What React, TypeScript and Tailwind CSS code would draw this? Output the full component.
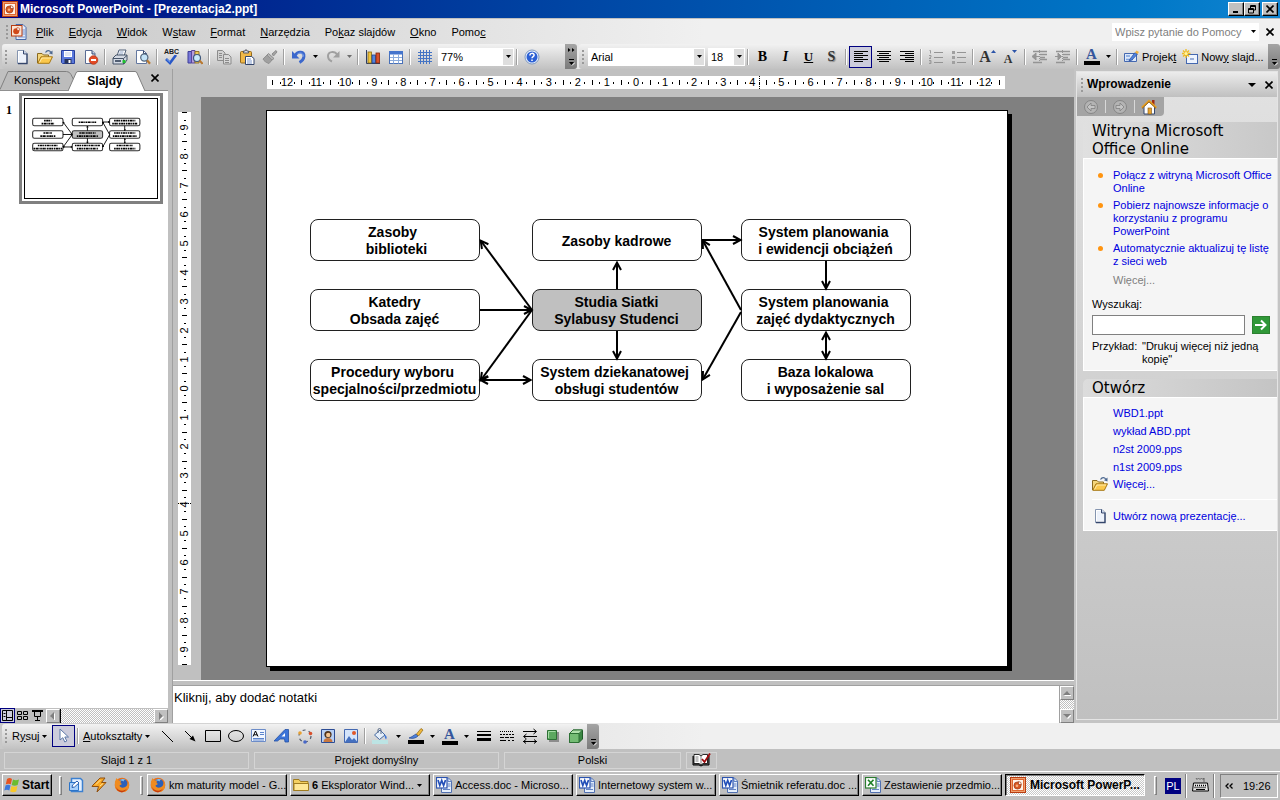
import { useState, type ReactNode } from "react";

/* ---------- small helpers ---------- */

function Icon({ children, size = 16 }: { children: ReactNode; size?: number }) {
  return (
    <svg width={size} height={size} viewBox="0 0 16 16" fill="none" aria-hidden="true" className="shrink-0">
      {children}
    </svg>
  );
}

function Caret() {
  return (
    <svg width="5" height="3" viewBox="0 0 5 3" aria-hidden="true" className="shrink-0">
      <path d="M0 0h5L2.500 3z" fill="#000" />
    </svg>
  );
}

function Cross() {
  return (
    <svg width="8" height="8" viewBox="0 0 8 8" aria-hidden="true">
      <path d="M.5 .5l7 7M7.500 .5l-7 7" stroke="#000" strokeWidth="1.600" />
    </svg>
  );
}

function Grip() {
  return (
    <span className="mx-px flex w-[6px] shrink-0 flex-col items-center gap-[2px]">
      {[0, 1, 2, 3].map((i) => (
        <i key={i} className="size-[2px] bg-[#9a9a9a]" />
      ))}
    </span>
  );
}

function Sep() {
  return <span className="mx-[2px] h-4 w-[2px] shrink-0 border-l border-r border-l-[#a0a0a0] border-r-white" />;
}

function Tool({ label, active, children }: { label: string; active?: boolean; children: ReactNode }) {
  return (
    <button
      aria-label={label}
      className={
        active
          ? "flex h-[22px] w-[23px] shrink-0 items-center justify-center border border-[#000080] bg-[#ccccdc]"
          : "flex h-[22px] w-[23px] shrink-0 items-center justify-center"
      }
    >
      {children}
    </button>
  );
}

function Drop({ label, dim }: { label: string; dim?: boolean }) {
  return (
    <button
      aria-label={label}
      className={dim ? "flex h-[22px] w-[11px] shrink-0 items-center justify-center opacity-50" : "flex h-[22px] w-[11px] shrink-0 items-center justify-center"}
    >
      <Caret />
    </button>
  );
}

function BarEnd({ arrows }: { arrows?: boolean }) {
  return (
    <button
      aria-label="Opcje paska narzędzi"
      className="flex h-[25px] w-[12px] shrink-0 flex-col items-center justify-between rounded-r-[3px] bg-gradient-to-b from-[#a4a4a4] to-[#7c7c7c] pt-1 pb-[3px]"
    >
      <svg width="7" height="5" viewBox="0 0 7 5">
        {arrows && <path d="M0 0l2.500 2L0 4zM4 0l2.500 2L4 4z" fill="#000" />}
      </svg>
      <svg width="7" height="7" viewBox="0 0 7 7">
        <path d="M1 .5h5" stroke="#000" />
        <path d="M1 3h5L3.500 6z" fill="#000" />
        <path d="M4 6.500l3-3" stroke="#fff" />
      </svg>
    </button>
  );
}

function Combo({ label, value, width }: { label: string; value: string; width: string }) {
  return (
    <div className={`relative h-[18px] shrink-0 bg-white ${width}`}>
      <select aria-label={label} className="block h-[18px] w-full appearance-none pl-[3px] text-[11px] leading-[16px] outline-none">
        <option>{value}</option>
      </select>
      <span className="pointer-events-none absolute inset-y-px right-px flex w-[10px] items-center justify-center bg-[#dedede]">
        <Caret />
      </span>
    </div>
  );
}

/* ---------- icons ---------- */

function PptLogo() {
  return (
    <Icon>
      <rect x=".5" y=".5" width="15" height="15" fill="#f0a070" stroke="#b83c10" />
      <rect x="2.500" y="2.500" width="11" height="11" fill="#fff4ea" stroke="#e06830" />
      <circle cx="7.500" cy="8.500" r="3.600" fill="#d85820" stroke="#8c2c0c" strokeWidth=".6" />
      <path d="M8.500 7.500V4.500a3.200 3.200 0 0 1 3 3z" fill="#fff" stroke="#a03810" strokeWidth=".7" />
      <circle cx="7" cy="8.800" r="1.300" fill="#f8b080" />
    </Icon>
  );
}

function PptDoc() {
  return (
    <Icon>
      <path d="M5 .5h7l3 3v12H5z" fill="#dfeafb" stroke="#4668a8" />
      <path d="M11 6h3M11 8h3M11 10h3M7 13h7" stroke="#7a98d0" />
      <rect x=".5" y="1.500" width="10.500" height="10.500" fill="#fbe4d4" stroke="#b83c10" />
      <circle cx="5.200" cy="7.200" r="3" fill="#d04818" />
      <path d="M6 6.300V3.500a2.600 2.600 0 0 1 2.800 2.800z" fill="#fff" stroke="#b83c10" strokeWidth=".6" />
    </Icon>
  );
}

function NewDoc() {
  return (
    <Icon>
      <path d="M3.500 1.500h6.500l3 3v10h-9.500z" fill="#fff" stroke="#8595b0" />
      <path d="M13 4.500v10H4" stroke="#34466c" strokeWidth="1.300" />
      <path d="M5 13V3h4v3h3v7z" fill="#edf2fb" />
      <path d="M9.500 1.500v3.500h3.500" fill="#c8d4ea" stroke="#34466c" />
    </Icon>
  );
}

function Folder() {
  return (
    <Icon>
      <path d="M.5 14V4.500h4.500l1.500 1.500h5v2" fill="#f4d67c" stroke="#8a6a20" />
      <path d="M.8 14.300L4 7.800h11.500L12.300 14.300z" fill="#fbc84c" stroke="#a87814" />
      <path d="M2.500 13.500L5 9h9" stroke="#ffebac" />
      <path d="M8.500 3.500c1.500-2.500 4-2.500 5.300-.2" stroke="#4c6890" strokeWidth="1.200" />
      <path d="M15.500 1.500v4l-3.600-1.200z" fill="#4c6890" />
    </Icon>
  );
}

function Save() {
  return (
    <Icon>
      <path d="M1.500 1.500h13v13h-12l-1-1z" fill="#5a78dc" stroke="#28409c" />
      <rect x="4" y="2" width="8" height="6" fill="#fff" />
      <path d="M5 4h6M5 6h6" stroke="#c0cce8" />
      <rect x="4.500" y="10" width="7" height="4.500" fill="#27345c" />
      <rect x="8.500" y="11" width="2" height="3" fill="#fff" />
    </Icon>
  );
}

function Permission() {
  return (
    <Icon>
      <path d="M2.500 1.500h6.500l3 3v10h-9.500z" fill="#fff" stroke="#5a6c94" />
      <path d="M9 1.500v3.500h3" fill="#c8d4ea" stroke="#34466c" />
      <circle cx="10.500" cy="11" r="4.300" fill="#e44a24" stroke="#a82c10" strokeWidth=".7" />
      <path d="M8 11h5" stroke="#fff" strokeWidth="2" />
    </Icon>
  );
}

function Print() {
  return (
    <Icon>
      <path d="M5 7l2-6h7l-2 6z" fill="#fff" stroke="#506078" />
      <path d="M7.500 3h4M7 5h4" stroke="#8ea4c8" />
      <path d="M1 9l3-3h11v5l-3 4H1z" fill="#d4dae4" stroke="#465468" />
      <path d="M1 9.500h10.500L15 6.500M11.500 9.500V15" stroke="#465468" />
      <path d="M3 12h6" stroke="#26344c" strokeWidth="1.500" />
      <rect x="10.500" y="11" width="3" height="3" fill="#20c030" />
    </Icon>
  );
}

function Preview() {
  return (
    <Icon>
      <path d="M1.500 1.500h7l3 3v10h-10z" fill="#fff" stroke="#6478a0" />
      <path d="M8.500 1.500v3h3" stroke="#34466c" />
      <circle cx="9.300" cy="8.500" r="3.600" fill="#c4e4f8" stroke="#50647c" strokeWidth="1.200" />
      <path d="M12 11.200l3 3.500" stroke="#b87830" strokeWidth="2.200" />
    </Icon>
  );
}

function Spelling() {
  return (
    <div className="flex flex-col items-center">
      <span className="text-[7px] leading-[6px] font-bold text-[#202020]">ABC</span>
      <svg width="14" height="10" viewBox="0 0 14 10" fill="none">
        <path d="M2 4l4 4L12 0" stroke="#2858c8" strokeWidth="2.600" />
        <path d="M2.500 4L6 7.200" stroke="#78a4f4" />
      </svg>
    </div>
  );
}

function Research() {
  return (
    <Icon>
      <path d="M1 2.500h3.500V14H1z" fill="#7878d8" stroke="#3c3c98" />
      <path d="M4.500 1.500h3.500V14H4.500z" fill="#b49cdc" stroke="#58449c" />
      <path d="M8 2.500h4V14H8z" fill="#ecca58" stroke="#94742c" />
      <circle cx="10" cy="9" r="3.500" fill="#c8e8fa" stroke="#40587c" strokeWidth="1.200" />
      <path d="M12.500 11.500l3 3.200" stroke="#b87830" strokeWidth="2" />
    </Icon>
  );
}

function Copy() {
  return (
    <Icon>
      <path d="M1.500 1.500h5l2.500 2.500v7.500H1.500z" fill="#d2d2d2" stroke="#8c8c8c" />
      <path d="M7.500 5.500h5l2.500 2.500v7H7.500z" fill="#d8d8d8" stroke="#8c8c8c" />
      <path d="M3 4.500h3M3 6.500h3M3 8.500h3M9 9.500h4M9 11.500h4M9 13.500h4" stroke="#8c8c8c" />
    </Icon>
  );
}

function Paste() {
  return (
    <Icon>
      <rect x="1.500" y="2.500" width="11" height="11.500" rx="1" fill="#f0b848" stroke="#946a1c" />
      <path d="M4.500 4V2h1.500l1-1.500 1 1.500h1.500v2z" fill="#d4dae8" stroke="#5a5a60" />
      <path d="M6.500 7.500h6l2.500 2v6H6.500z" fill="#fff" stroke="#34466c" />
      <path d="M8 10h4M8 12h5M8 14h5" stroke="#7c98cc" />
    </Icon>
  );
}

function Brush() {
  return (
    <Icon>
      <path d="M10 5l4-3.500 1 1.500-3.500 4z" fill="#a4a4a4" stroke="#8c8c8c" />
      <path d="M6.500 4.500l5.500 5-2 1.500L5 6z" fill="#b4b4b4" stroke="#8c8c8c" />
      <path d="M5 6l5 5-3 3.500C4 13.500 2 12 1 10z" fill="#a0a0a0" stroke="#909090" />
    </Icon>
  );
}

function Undo({ dim }: { dim?: boolean }) {
  return dim ? (
    <Icon>
      <path d="M12.500 6C9.500 1.500 3 2.500 3 7c0 2.500 1.500 4.500 4 5.500" stroke="#a0a0a0" strokeWidth="2" />
      <path d="M14.500 2v6.500H8z" fill="#a0a0a0" />
    </Icon>
  ) : (
    <Icon>
      <path d="M4 6.500C7 1.500 13.500 2.500 13 7.500c-.3 2.500-2 4.500-4.500 6" stroke="#3c68cc" strokeWidth="2.800" />
      <path d="M1 2v7.500H8.500z" fill="#3c68cc" />
      <path d="M6.500 5c3-2 6-.6 6 2.500" stroke="#90b4f4" strokeWidth=".8" />
    </Icon>
  );
}

function ChartIcon() {
  return (
    <Icon>
      <path d="M1.500 1v13.500H15" stroke="#2c3c60" />
      <rect x="3" y="3" width="3.500" height="11" fill="#f0c43c" stroke="#8c6c10" strokeWidth=".8" />
      <rect x="7" y="6" width="3.500" height="8" fill="#5084e0" stroke="#24448c" strokeWidth=".8" />
      <rect x="11" y="4" width="3.500" height="10" fill="#d8502c" stroke="#842408" strokeWidth=".8" />
    </Icon>
  );
}

function TableIcon() {
  return (
    <Icon>
      <rect x="1.500" y="2.500" width="13" height="12" fill="#fff" stroke="#4870b8" />
      <rect x="1" y="2" width="14" height="3.500" fill="#4474cc" />
      <path d="M2 8.500h12M2 11.500h12M5.500 5.500v9M10.500 5.500v9" stroke="#8cacdc" />
    </Icon>
  );
}

function GridIcon() {
  return (
    <Icon>
      <path d="M1 3.500h14M1 6.500h14M1 9.500h14M1 12.500h14M3.500 1v14M6.500 1v14M9.500 1v14M12.500 1v14" stroke="#4474c4" />
    </Icon>
  );
}

function HelpIcon() {
  return (
    <Icon>
      <circle cx="8" cy="8" r="7" fill="#e8f0fc" stroke="#6888b8" strokeWidth=".8" />
      <circle cx="8" cy="8" r="5.500" fill="#2c60d4" />
      <path d="M5.900 6.500c0-2.800 4.400-2.800 4.200-.2C10 7.600 8 7.600 8 9.300M8 10.600v1.500" stroke="#fff" strokeWidth="1.500" />
    </Icon>
  );
}

function Align({ kind }: { kind: "left" | "center" | "right" }) {
  const d = {
    left: "M1 2.500h14M1 4.500h9M1 6.500h14M1 8.500h9M1 10.500h14M1 12.500h9",
    center: "M1 2.500h14M3 4.500h10M1 6.500h14M3 8.500h10M1 10.500h14M3 12.500h10",
    right: "M1 2.500h14M6 4.500h9M1 6.500h14M6 8.500h9M1 10.500h14M6 12.500h9",
  };
  return (
    <Icon>
      <path d={d[kind]} stroke="#000" />
    </Icon>
  );
}

function ListIcon({ numbered }: { numbered?: boolean }) {
  return (
    <Icon>
      <path d="M6 3.500h9M6 8.500h9M6 13.500h9" stroke="#949494" />
      {numbered ? (
        <path d="M1.500 1.500h1v3M1 6.500h2v1.500l-2 1.500h2M1 11.500h2v3H1M1.500 13h1.500" stroke="#949494" strokeWidth=".9" />
      ) : (
        <path d="M1 2h3v3H1zM1 7h3v3H1zM1 12h3v3H1z" fill="#a0a0a0" />
      )}
    </Icon>
  );
}

function IndentIcon({ back }: { back?: boolean }) {
  return (
    <Icon>
      <path d="M1 2.500h14M8 5.500h7M8 8.500h5M8 10.500h7M1 13.500h9" stroke="#949494" strokeWidth="1.300" />
      {back ? (
        <path d="M0 7.500L4 4v7zM3 7.500h4" fill="#949494" stroke="#949494" />
      ) : (
        <path d="M6.500 7.500L3 4v7zM0 7.500h4" fill="#949494" stroke="#949494" />
      )}
      <path d="M7.500 1v14" stroke="#949494" strokeDasharray="1 1" />
    </Icon>
  );
}

function FontSize({ up }: { up?: boolean }) {
  return (
    <span className="flex items-start">
      <span
        className={
          up
            ? "font-['Liberation_Serif',serif] text-[16px] leading-[18px] font-bold text-[#333]"
            : "pt-[4px] font-['Liberation_Serif',serif] text-[12px] leading-[14px] font-bold text-[#333]"
        }
      >
        A
      </span>
      <svg width="5" height="3" viewBox="0 0 5 3" className="mt-[2px]">
        <path d={up ? "M0 3h5L2.500 0z" : "M0 0h5L2.500 3z"} fill="#2c54a8" />
      </svg>
    </span>
  );
}

function FontColor() {
  return (
    <span className="flex w-4 flex-col items-center">
      <span className="font-['Liberation_Serif',serif] text-[15px] leading-[13px] font-bold text-[#34569c]">A</span>
      <i className="h-[4px] w-4 bg-black" />
    </span>
  );
}

function DesignIcon() {
  return (
    <Icon>
      <path d="M1.500 4.500h12v8h-12z" fill="#dce8fa" stroke="#4468b0" />
      <path d="M3 10.500h7M3 7h4" stroke="#7ca0dc" strokeWidth="1.400" />
      <path d="M7 10l5-6.500 2.500 1.500L9 11l-3 1z" fill="#5084e0" stroke="#2c4c94" strokeWidth=".7" />
      <path d="M12 3.500l1.500-2L16 3l-1.500 2z" fill="#f4b440" />
    </Icon>
  );
}

function NewSlideIcon() {
  return (
    <Icon>
      <rect x="4.500" y="5.500" width="11" height="9" fill="#eef4fe" stroke="#4468b0" />
      <path d="M8 10h4" stroke="#4468b0" />
      <path d="M4 0v9M0 4.500h8.500M1 1.500l6 6M7 1.500l-6 6" stroke="#f0bc20" strokeWidth="1.300" />
      <circle cx="4" cy="4.500" r="1.600" fill="#fff4a0" />
    </Icon>
  );
}

function HomeIcon() {
  return (
    <Icon>
      <rect x="11" y="1" width="2.500" height="5" fill="#a02c14" />
      <path d="M3 7.500V15h10.500V7.500L8 2.500z" fill="#fff" stroke="#34466c" />
      <path d="M.8 8.800L8 1.800l7.300 7" stroke="#e8a020" strokeWidth="2" />
      <path d="M1 9.500L8 2.800l7 6.700" stroke="#644010" strokeWidth=".6" />
      <rect x="7" y="9" width="3.500" height="6" fill="#e8a430" stroke="#80540c" strokeWidth=".6" />
    </Icon>
  );
}

function NavArrow({ forward }: { forward?: boolean }) {
  return (
    <Icon>
      <circle cx="8" cy="8" r="6.500" fill="#b4b4b4" stroke="#868686" />
      <path
        d={forward ? "M4 6.500h4V4l4 4-4 4V9.500H4z" : "M12 6.500H8V4L4 8l4 4V9.500h4z"}
        fill="#c4c4c4"
        stroke="#808080"
        strokeWidth=".8"
      />
    </Icon>
  );
}

function Firefox() {
  return (
    <Icon>
      <circle cx="8" cy="8" r="7.300" fill="#e8701c" />
      <circle cx="8.800" cy="6.800" r="4.800" fill="#2c60b8" />
      <path d="M5.500 3.500c1.500-1.500 4-2 6-.8-1.500 0-2 .8-1.500 1.800-1.500-.8-3-.6-4.500-1z" fill="#7cbcec" />
      <path d="M1 4.500L2.500 1l2 2.500 2.500.3L6.500 6 8 7l-2.500 1.500c.5 2.500 4.500 3 7 .5 1-1.200 1.500-3 1-5C16.500 8 15 15 8 15.300 3 15 .3 10 1 4.500z" fill="#f08c20" />
      <path d="M2 10c2 4 8 5 11 1.500-1.500 3-4 4-6 3.700C4.500 14.800 2.500 12.500 2 10z" fill="#c43c10" />
    </Icon>
  );
}

function OfficeDoc({ excel }: { excel?: boolean }) {
  return (
    <Icon>
      <path d="M5.500 1h7l3 3v11.500h-10z" fill="#e4eefc" stroke="#5070b0" />
      <path d="M12 1v3.500h3.500M11.500 7h3M11.500 9h3M7 12.500h7" stroke="#6484c4" />
      <rect x=".5" y=".5" width="10.500" height="10.500" fill="#fff" stroke={excel ? "#2c7c30" : "#2c54b0"} strokeWidth="1.200" />
      <path
        d={excel ? "M3 2.800l5.500 6M8.500 2.800l-5.500 6" : "M2 3l1.800 5.500L5.700 3.500l1.900 5L9.500 3"}
        stroke={excel ? "#208028" : "#2450b8"}
        strokeWidth="1.700"
      />
    </Icon>
  );
}

function PlainFolder() {
  return (
    <Icon>
      <path d="M.5 13.500v-11h5.500l1.500 2h7.500v9z" fill="#f4d060" stroke="#a07c20" />
      <path d="M1 13.500V6.500h14.500v7z" fill="#ffe896" stroke="#a07c20" />
    </Icon>
  );
}

function WinFlag() {
  return (
    <Icon>
      <path d="M3 2c1.800-1.200 3.400-1.200 5 0L6.800 7.300C5.200 6.500 3.500 6.500 1.800 7.300z" fill="#e85420" />
      <path d="M9 2.500c2 1 3.800 1 6 0L13.700 8c-2.200 1-4 1-6 0z" fill="#6cbc30" />
      <path d="M1.500 8.500c1.700-.9 3.400-.9 5 0L5.300 13.500C3.700 12.600 2 12.600.3 13.500z" fill="#3c78dc" />
      <path d="M7.400 9.100c2 1 3.800 1 6 0l-1.200 5.300c-2.200 1-4 1-6 0z" fill="#f8c828" />
    </Icon>
  );
}

/* ---------- diagram ---------- */

const NODES = [
  { x: 43, y: 108, text: "Zasoby \n biblioteki" },
  { x: 43, y: 178, text: "Katedry\nObsada zajęć" },
  { x: 43, y: 248, text: "Procedury wyboru \nspecjalności/przedmiotu" },
  { x: 265, y: 108, text: "Zasoby kadrowe" },
  { x: 265, y: 178, text: "Studia Siatki\nSylabusy Studenci", dark: true },
  { x: 265, y: 248, text: "System dziekanatowej \nobsługi studentów" },
  { x: 474, y: 108, text: "System planowania \ni ewidencji obciążeń" },
  { x: 474, y: 178, text: "System planowania \nzajęć dydaktycznych" },
  { x: 474, y: 248, text: "Baza lokalowa\ni wyposażenie sal" },
];

// x1, y1, x2, y2, head on both ends
const ARROWS: [number, number, number, number, boolean?][] = [
  [265, 199, 214, 130],
  [213, 199, 264, 199],
  [265, 199, 214, 269],
  [214, 269, 263, 269, true],
  [350, 178, 350, 152],
  [350, 220, 350, 247],
  [435, 129, 473, 129],
  [474, 199, 436, 130],
  [474, 201, 436, 268],
  [559, 150, 559, 177],
  [559, 222, 559, 247, true],
];

function Arrows({ id, weight }: { id: string; weight: number }) {
  return (
    <>
      <defs>
        <marker id={id} markerUnits="userSpaceOnUse" markerWidth="12" markerHeight="12" refX="9" refY="6" orient="auto-start-reverse">
          <path d="M2 2L9.500 6 2 10" fill="none" stroke="#000" strokeWidth={weight} />
        </marker>
      </defs>
      {ARROWS.map(([x1, y1, x2, y2, both]) => (
        <line
          key={`${x1}-${y1}-${x2}-${y2}`}
          x1={x1}
          y1={y1}
          x2={x2}
          y2={y2}
          stroke="#000"
          strokeWidth={weight}
          markerEnd={`url(#${id})`}
          markerStart={both ? `url(#${id})` : undefined}
        />
      ))}
    </>
  );
}

function Slide() {
  return (
    <div className="relative h-[557px] w-[742px] shrink-0 border border-black bg-white shadow-[4px_4px_0_#000]">
      {NODES.map((n) => (
        <div
          key={n.text}
          className={
            n.dark
              ? "absolute flex h-[42px] w-[170px] items-center justify-center rounded-[8px] border border-[#202020] bg-[#c0c0c0] pt-[2px] text-center text-[14px] leading-[17px] font-bold whitespace-pre"
              : "absolute flex h-[42px] w-[170px] items-center justify-center rounded-[8px] border border-[#202020] bg-white pt-[2px] text-center text-[14px] leading-[17px] font-bold whitespace-pre"
          }
          style={{ left: n.x, top: n.y }}
        >
          {n.text}
        </div>
      ))}
      <svg viewBox="0 0 740 555" className="absolute inset-0 size-full" aria-hidden="true">
        <Arrows id="head" weight={2} />
      </svg>
    </div>
  );
}

function Thumbnail() {
  return (
    <svg viewBox="0 0 740 555" className="block w-full" aria-hidden="true">
      {NODES.map((n) => {
        const lines = n.text.split("\n");
        return (
          <g key={n.text}>
            <rect x={n.x} y={n.y} width="170" height="42" rx="10" fill={n.dark ? "#c0c0c0" : "#fff"} stroke="#303030" strokeWidth="6" />
            {lines.map((line, i) => (
              <line
                key={line}
                x1={n.x + 85 - line.trim().length * 3.500}
                x2={n.x + 85 + line.trim().length * 3.500}
                y1={n.y + (lines.length === 1 ? 22 : 13 + i * 17)}
                y2={n.y + (lines.length === 1 ? 22 : 13 + i * 17)}
                stroke="#000"
                strokeWidth="9"
                strokeDasharray="9 3 14 2 6 4"
              />
            ))}
          </g>
        );
      })}
      <Arrows id="thumb-head" weight={5} />
    </svg>
  );
}

/* ---------- rulers ---------- */

const H_MARKS = Array.from({ length: 25 }, (_, i) => Math.abs(i - 12));
const V_MARKS = Array.from({ length: 19 }, (_, i) => Math.abs(i - 9));

function HRuler() {
  return (
    <div className="relative flex h-[13px] w-[738px] items-center bg-white px-[5px] text-[11px] leading-[13px]">
      {H_MARKS.map((n, i) => (
        <div key={i} className="flex flex-1 items-center">
          <i className="h-[5px] w-px bg-black" />
          <span className="flex-1" />
          <i className="h-[2px] w-px bg-black" />
          <span className="w-[13px] text-center">{n}</span>
          <i className="h-[2px] w-px bg-black" />
          <span className="flex-1" />
        </div>
      ))}
      <i className="h-[5px] w-px bg-black" />
      {/* pointer position */}
      <i className="absolute inset-y-0 left-2/3 border-l border-dotted border-black" />
    </div>
  );
}

function VRuler() {
  return (
    <div className="relative flex h-[553px] w-[13px] flex-col items-center bg-white text-[11px] leading-[13px]">
      {V_MARKS.map((n, i) => (
        <div key={i} className="flex flex-1 flex-col items-center">
          <i className="h-px w-[5px] bg-black" />
          <span className="flex-1" />
          <i className="h-px w-[2px] bg-black" />
          <span className="h-[13px] w-[13px] -rotate-90 text-center">{n}</span>
          <i className="h-px w-[2px] bg-black" />
          <span className="flex-1" />
        </div>
      ))}
      <i className="h-px w-[5px] bg-black" />
      <i className="absolute inset-x-0 top-[391px] border-t border-dotted border-black" />
    </div>
  );
}

/* ---------- sections ---------- */

function WinButton({ label, children }: { label: string; children: ReactNode }) {
  return (
    <button
      aria-label={label}
      className="flex h-[14px] w-4 items-center justify-center border border-t-white border-r-black border-b-black border-l-white bg-[#c0c0c0] shadow-[inset_-1px_-1px_0_#808080]"
    >
      {children}
    </button>
  );
}

function TitleBar() {
  return (
    <header className="flex h-[18px] shrink-0 items-center bg-gradient-to-r from-[#000080] to-[#1084d0] pr-[2px] pl-[2px]">
      <PptLogo />
      <h1 className="ml-[2px] flex-1 text-[12px] leading-[18px] font-bold text-white">Microsoft PowerPoint - [Prezentacja2.ppt]</h1>
      <WinButton label="Minimalizuj">
        <svg width="8" height="8" viewBox="0 0 8 8">
          <path d="M1 7h5" stroke="#000" strokeWidth="2" />
        </svg>
      </WinButton>
      <WinButton label="Przywróć w dół">
        <svg width="9" height="9" viewBox="0 0 9 9" fill="none" stroke="#000">
          <path d="M2.500 3V.5h5v4.500H6M2.500 1.500h5" />
          <path d="M.5 3.500h5v4.500h-5zM.5 4.500h5" />
        </svg>
      </WinButton>
      <span className="w-[2px]" />
      <WinButton label="Zamknij">
        <Cross />
      </WinButton>
    </header>
  );
}

const MENU = [
  ["", "P", "lik"],
  ["", "E", "dycja"],
  ["", "W", "idok"],
  ["W", "s", "taw"],
  ["", "F", "ormat"],
  ["", "N", "arzędzia"],
  ["Po", "k", "az slajdów"],
  ["", "O", "kno"],
  ["Pomo", "c", ""],
];

function MenuBar() {
  return (
    <nav className="flex h-[25px] shrink-0 items-center pr-1 pl-[3px]">
      <Grip />
      <PptDoc />
      <div className="ml-[2px] flex flex-1 gap-px">
        {MENU.map(([a, b, c]) => (
          <button key={a + b + c} className="px-[7px] text-[11px] leading-[18px]">
            {a}
            <u>{b}</u>
            {c}
          </button>
        ))}
      </div>
      <div className="flex h-[18px] w-[147px] items-center bg-white">
        <input
          aria-label="Wpisz pytanie do Pomocy"
          placeholder="Wpisz pytanie do Pomocy"
          className="h-[18px] min-w-0 flex-1 pl-[3px] text-[11px] outline-none placeholder:text-[#808080]"
        />
        <Drop label="Poprzednie pytania" />
      </div>
      <button aria-label="Zamknij okno" className="ml-[5px] flex w-[12px] justify-center">
        <Cross />
      </button>
    </nav>
  );
}

function Toolbars() {
  return (
    <div className="flex h-[25px] shrink-0 gap-[2px] pl-[2px]">
      <div className="flex w-[575px] shrink-0 items-center rounded-[3px] bg-gradient-to-b from-[#f2f2f2] to-[#c2c2c2]">
        <Grip />
        <Tool label="Nowy"><NewDoc /></Tool>
        <Tool label="Otwórz"><Folder /></Tool>
        <Tool label="Zapisz"><Save /></Tool>
        <Tool label="Uprawnienia"><Permission /></Tool>
        <Sep />
        <Tool label="Drukuj"><Print /></Tool>
        <Tool label="Podgląd wydruku"><Preview /></Tool>
        <Sep />
        <Tool label="Pisownia"><Spelling /></Tool>
        <Tool label="Poszukaj"><Research /></Tool>
        <Sep />
        <Tool label="Kopiuj"><Copy /></Tool>
        <Tool label="Wklej"><Paste /></Tool>
        <Tool label="Malarz formatów"><Brush /></Tool>
        <Sep />
        <Tool label="Cofnij"><Undo /></Tool>
        <Drop label="Lista cofania" />
        <Tool label="Ponów"><Undo dim /></Tool>
        <Drop label="Lista ponawiania" dim />
        <Sep />
        <Tool label="Wstaw wykres"><ChartIcon /></Tool>
        <Tool label="Wstaw tabelę"><TableIcon /></Tool>
        <Sep />
        <Tool label="Siatka"><GridIcon /></Tool>
        <span className="w-[2px]" />
        <Combo label="Powiększenie" value="77%" width="w-[76px]" />
        <Sep />
        <Tool label="Pomoc"><HelpIcon /></Tool>
        <span className="flex-1" />
        <BarEnd arrows />
      </div>
      <div className="flex min-w-0 flex-1 items-center rounded-l-[3px] bg-gradient-to-b from-[#f2f2f2] to-[#c2c2c2]">
        <Grip />
        <span className="w-px" />
        <Combo label="Czcionka" value="Arial" width="w-[117px]" />
        <span className="w-[3px]" />
        <Combo label="Rozmiar czcionki" value="18" width="w-[37px]" />
        <Sep />
        <Tool label="Pogrubienie">
          <b className="font-['Liberation_Serif',serif] text-[14px] leading-4">B</b>
        </Tool>
        <Tool label="Kursywa">
          <b className="font-['Liberation_Serif',serif] text-[14px] leading-4 italic">I</b>
        </Tool>
        <Tool label="Podkreślenie">
          <b className="font-['Liberation_Serif',serif] text-[13px] leading-4 underline">U</b>
        </Tool>
        <Tool label="Cień">
          <b className="font-['Liberation_Serif',serif] text-[14px] leading-4 text-[#333] [text-shadow:1px_1px_1px_#888]">S</b>
        </Tool>
        <Sep />
        <Tool label="Wyrównaj do lewej" active><Align kind="left" /></Tool>
        <Tool label="Wyśrodkuj"><Align kind="center" /></Tool>
        <Tool label="Wyrównaj do prawej"><Align kind="right" /></Tool>
        <Sep />
        <Tool label="Numerowanie"><ListIcon numbered /></Tool>
        <Tool label="Punktory"><ListIcon /></Tool>
        <Sep />
        <Tool label="Zwiększ czcionkę"><FontSize up /></Tool>
        <Tool label="Zmniejsz czcionkę"><FontSize /></Tool>
        <Sep />
        <Tool label="Zmniejsz wcięcie"><IndentIcon back /></Tool>
        <Tool label="Zwiększ wcięcie"><IndentIcon /></Tool>
        <Sep />
        <Tool label="Kolor czcionki"><FontColor /></Tool>
        <Drop label="Kolory czcionki" />
        <Sep />
        <button className="ml-[3px] flex items-center gap-[3px] text-[11px] leading-4 whitespace-nowrap">
          <DesignIcon />
          <span>Projek<u>t</u></span>
        </button>
        <button className="ml-[6px] flex items-center gap-[3px] text-[11px] leading-4 whitespace-nowrap">
          <NewSlideIcon />
          <span>Now<u>y</u> slajd...</span>
        </button>
        <span className="flex-1" />
        <BarEnd />
      </div>
    </div>
  );
}

function ScrollButton({ label, d }: { label: string; d: string }) {
  return (
    <button
      aria-label={label}
      className="flex size-[14px] shrink-0 items-center justify-center border border-t-white border-r-[#808080] border-b-[#808080] border-l-white bg-[#c0c0c0]"
    >
      <svg width="8" height="8" viewBox="0 0 8 8">
        <path d={d} fill="#fff" transform="translate(1 1)" />
        <path d={d} fill="#808080" />
      </svg>
    </button>
  );
}

function SlidePane() {
  return (
    <aside className="flex w-[168px] shrink-0 flex-col bg-white">
      <div className="flex h-[22px] items-end border-b border-[#909090] bg-[#c0c0c0] text-[11px]">
        <button className="relative h-[19px] w-[74px]">
          <svg viewBox="0 0 74 19" className="absolute inset-0 size-full" aria-hidden="true">
            <path d="M0 18.500L8 .5H66.500q3 0 4.500 3l3 6v9" fill="#bcbcbc" stroke="#808080" />
          </svg>
          <span className="relative">Konspekt</span>
        </button>
        <button className="relative -mb-px -ml-[6px] h-5 w-[78px] pr-[4px] text-[12px] font-bold">
          <svg viewBox="0 0 78 20" className="absolute inset-0 size-full" aria-hidden="true">
            <path d="M0 20L8 2q.5-1.500 2-1.500H67q1.500 0 2 1.500l8 18" fill="#fff" stroke="#808080" />
          </svg>
          <span className="relative">Slajdy</span>
        </button>
        <button aria-label="Zamknij panel" className="mb-[8px] ml-[5px]">
          <Cross />
        </button>
      </div>
      <ol className="flex-1 pt-[2px]">
        <li className="flex items-start pl-[6px]">
          <span className="w-[13px] pt-[9px] font-['Liberation_Serif',serif] text-[12px] leading-4 font-bold">1</span>
          <div className="w-[144px] border-[3px] border-[#808080] p-[2px]">
            <div className="border border-black">
              <Thumbnail />
            </div>
          </div>
        </li>
      </ol>
      <div className="flex h-[15px] items-center bg-[#c0c0c0]">
        <button aria-label="Widok normalny" className="flex size-[15px] items-center justify-center border border-[#000080] bg-[#ccccdc]">
          <svg width="11" height="11" viewBox="0 0 11 11" fill="none" stroke="#000">
            <path d="M.5 .5h10v10H.5zM4.500 .5v10M4.500 7.500h6M1.500 3.500h2M1.500 6.500h2" />
          </svg>
        </button>
        <button aria-label="Sortowanie slajdów" className="flex size-[15px] items-center justify-center">
          <svg width="11" height="9" viewBox="0 0 11 9" fill="none" stroke="#000">
            <path d="M.5 .5h4v3h-4zM6.500 .5h4v3h-4zM.5 5.500h4v3h-4zM6.500 5.500h4v3h-4z" />
          </svg>
        </button>
        <button aria-label="Pokaz slajdów" className="flex size-[15px] items-center justify-center">
          <svg width="11" height="11" viewBox="0 0 11 11" fill="none" stroke="#000">
            <path d="M0 1h11" strokeWidth="2" />
            <path d="M2.500 2v4.500h6V2M5.500 6.500V10M3 10.500h5" />
          </svg>
        </button>
        <div className="ml-px flex flex-1 bg-[repeating-conic-gradient(#fff_0_25%,#c0c0c0_0_50%)] bg-[length:2px_2px]">
          <ScrollButton label="Przewiń w lewo" d="M5 0v8L1 4z" />
          <span className="w-px bg-black" />
          <span className="flex-1" />
          <ScrollButton label="Przewiń w prawo" d="M2 0v8l4-4z" />
        </div>
      </div>
    </aside>
  );
}

function Workspace() {
  return (
    <main className="ml-[4px] flex min-w-0 flex-1 flex-col border-l border-[#a0a0a0]">
      <div className="flex h-[28px] shrink-0 items-center justify-center pt-[4px] pr-[3px] pb-[5px] pl-[28px]">
        <HRuler />
      </div>
      <div className="flex min-h-0 flex-1">
        <div className="flex w-[28px] shrink-0 items-center pl-[5px]">
          <VRuler />
        </div>
        <div className="flex min-w-0 flex-1 items-center justify-center overflow-hidden bg-[#808080] pr-[2px]">
          <Slide />
        </div>
      </div>
      <div className="h-[5px] shrink-0 border-t border-white" />
      <div className="flex h-[38px] shrink-0 border-t border-[#a0a0a0] bg-white">
        <textarea
          aria-label="Notatki"
          defaultValue="Kliknij, aby dodać notatki"
          className="flex-1 resize-none pt-[4px] pl-px text-[13px] leading-4 outline-none"
        />
        <div className="flex w-[15px] flex-col items-end justify-between border-l border-[#a0a0a0] bg-[repeating-conic-gradient(#fff_0_25%,#c0c0c0_0_50%)] bg-[length:2px_2px]">
          <ScrollButton label="W górę" d="M0 6h8L4 2z" />
          <ScrollButton label="W dół" d="M0 2h8L4 6z" />
        </div>
      </div>
    </main>
  );
}

const NEWS = [
  "Połącz z witryną Microsoft Office Online",
  "Pobierz najnowsze informacje o korzystaniu z programu PowerPoint",
  "Automatycznie aktualizuj tę listę z sieci web",
];

const RECENT = ["WBD1.ppt", "wykład ABD.ppt", "n2st 2009.pps", "n1st 2009.pps"];

function TaskPane() {
  const [query, setQuery] = useState("");

  return (
    <aside className="flex w-[206px] shrink-0 bg-[#c4c4c4] pt-[2px] pr-[2px] pb-[3px] pl-[2px]">
      <div className="flex flex-1 flex-col border border-[#e4e4e4] bg-gradient-to-b from-[#e2e2e2] to-[#c0c0c0] text-[11px] leading-[13px]">
        <div className="flex h-[25px] items-center bg-gradient-to-b from-[#ececec] to-[#c0c0c0] pr-[4px] pl-px">
          <Grip />
          <h2 className="ml-px flex-1 text-[12px] font-bold">Wprowadzenie</h2>
          <button aria-label="Inne okienka zadań" className="mr-[9px]">
            <svg width="8" height="4" viewBox="0 0 8 4">
              <path d="M0 0h8L4 4z" />
            </svg>
          </button>
          <button aria-label="Zamknij okienko">
            <Cross />
          </button>
        </div>
        <div className="flex h-[19px] w-[87px] items-center rounded-br-[4px] bg-[#a4a4a4] pl-[6px]">
          <button aria-label="Wstecz"><NavArrow /></button>
          <span className="mx-[6px] h-[13px] w-px bg-[#d8d8d8]" />
          <button aria-label="Dalej"><NavArrow forward /></button>
          <span className="mx-[6px] h-[13px] w-px bg-[#d8d8d8]" />
          <button aria-label="Strona główna"><HomeIcon /></button>
        </div>

        <section className="mt-[6px] ml-[6px]">
          <h3 className="rounded-tl-[5px] border-b border-white bg-gradient-to-r from-[#e0e0e0] to-[#c8c8c8] pr-10 pl-[9px] font-['DejaVu_Sans',sans-serif] text-[15px] leading-[18px]">
            Witryna Microsoft Office Online
          </h3>
          <div className="border-b border-l border-white bg-[#f5f5f5] pt-[10px] pb-[4px] pl-[8px]">
            <ul className="flex flex-col gap-[4px]">
              {NEWS.map((item) => (
                <li key={item} className="flex">
                  <i className="mt-[4px] ml-[6px] size-[5px] shrink-0 rounded-full bg-[#ff9410]" />
                  <a href="#news" className="ml-[10px] w-[162px] text-[#0000e0]">{item}</a>
                </li>
              ))}
            </ul>
            <p className="mt-[6px] pl-[21px] text-[#808080]">Więcej...</p>
            <label htmlFor="search" className="mt-[11px] block">Wyszukaj:</label>
            <div className="mt-[4px] flex items-center">
              <input
                id="search"
                value={query}
                onChange={(e) => setQuery(e.target.value)}
                className="h-5 w-[153px] border border-[#808080] bg-white px-[2px] outline-none"
              />
              <button aria-label="Szukaj" className="ml-[7px] flex size-[18px] items-center justify-center border border-[#2c8030] bg-[#309838]">
                <svg width="12" height="12" viewBox="0 0 12 12" fill="none" stroke="#fff" strokeWidth="2">
                  <path d="M0 6h10.500M6 1.500L10.500 6 6 10.500" />
                </svg>
              </button>
            </div>
            <div className="mt-[5px] flex">
              <span className="w-[50px] shrink-0">Przykład:</span>
              <span className="w-[125px]">"Drukuj więcej niż jedną kopię"</span>
            </div>
          </div>
        </section>

        <section className="mt-[8px] ml-[6px]">
          <h3 className="rounded-tl-[5px] border-b border-white bg-gradient-to-r from-[#dcdcdc] to-[#c4c4c4] pl-[9px] font-['DejaVu_Sans',sans-serif] text-[15px] leading-[18px]">
            Otwórz
          </h3>
          <div className="border-b border-l border-white bg-[#f5f5f5] pt-[6px] pb-[6px] pl-[8px]">
            {RECENT.map((file) => (
              <a key={file} href="#recent" className="block pl-[21px] leading-[18px] text-[#0000e0]">{file}</a>
            ))}
            <a href="#more" className="flex items-center gap-[5px] text-[#0000e0]">
              <Folder />
              Więcej...
            </a>
            <hr className="mt-[7px] mb-[8px] border-white" />
            <a href="#new" className="flex items-center gap-[5px] text-[#0000e0]">
              <NewDoc />
              Utwórz nową prezentację...
            </a>
          </div>
        </section>
      </div>
    </aside>
  );
}

function DrawingBar() {
  return (
    <div className="flex h-[26px] shrink-0 items-center bg-gradient-to-r from-[#c8c8c8] via-[#f0f0f0] via-55% to-[#f0f0f0] pl-[2px]">
      <div className="flex h-[25px] w-[597px] items-center rounded-[3px] bg-gradient-to-b from-[#f2f2f2] to-[#c2c2c2]">
        <Grip />
        <button className="flex h-[22px] w-[42px] shrink-0 items-center justify-between pr-[5px] pl-[2px] text-[11px]">
          <span>R<u>y</u>suj</span>
          <Caret />
        </button>
        <Tool label="Zaznacz obiekty" active>
          <Icon>
            <path d="M4 1v11l2.800-2.300L8.800 14l2-1-2-4h3.700z" fill="#fff" stroke="#5c78a8" />
          </Icon>
        </Tool>
        <Sep />
        <button className="flex h-[22px] w-[74px] shrink-0 items-center justify-between pr-[5px] pl-[2px] text-[11px]">
          <span><u>A</u>utokształty</span>
          <Caret />
        </button>
        <Tool label="Linia">
          <Icon><path d="M3 3l11 11" stroke="#000" /></Icon>
        </Tool>
        <Tool label="Strzałka">
          <Icon>
            <path d="M3 3l8 8" stroke="#000" />
            <path d="M13.500 13.500L7.500 11l3.500-3.500z" fill="#000" />
          </Icon>
        </Tool>
        <Tool label="Prostokąt">
          <Icon><path d="M.5 2.500h15v11H.5z" stroke="#000" /></Icon>
        </Tool>
        <Tool label="Elipsa">
          <Icon><ellipse cx="8" cy="8" rx="7.500" ry="5.500" stroke="#000" /></Icon>
        </Tool>
        <Tool label="Pole tekstowe">
          <Icon>
            <path d="M.5 1.500h14v12H.5z" fill="#f2f7ff" stroke="#6c8cc8" />
            <path d="M2 8.500L4.500 3 7 8.500M3 6.800h3" stroke="#000" />
            <path d="M9 4.500h4M9 6.500h4M2 10.500h11M2 12h11" stroke="#5c84cc" />
          </Icon>
        </Tool>
        <Tool label="Wstaw WordArt">
          <Icon>
            <path d="M0 13L11 1.500h3.500V14h-3.500l-.5-3H6l-2.500 2z" fill="#3c74d8" stroke="#2450a4" strokeWidth=".8" />
            <path d="M7.500 8.500L11 5v3.500z" fill="#fff" />
          </Icon>
        </Tool>
        <Tool label="Wstaw diagram">
          <Icon>
            <circle cx="8" cy="8" r="6" stroke="#505868" strokeDasharray="3 3.280" strokeWidth="1.200" />
            <circle cx="3" cy="5" r="1.800" fill="#e8a030" />
            <circle cx="13.500" cy="5.500" r="1.800" fill="#d8502c" />
            <circle cx="8" cy="14" r="1.800" fill="#4868c8" />
          </Icon>
        </Tool>
        <Tool label="Wstaw obiekt clipart">
          <Icon>
            <path d="M1.500 1.500h13v13h-13z" fill="#b8d0f4" stroke="#2c4c94" />
            <path d="M3.500 14c0-3 2-4 4.500-4s4.500 1 4.500 4z" fill="#c87840" />
            <circle cx="8" cy="6.500" r="3.600" fill="#50341c" />
            <circle cx="8.200" cy="7" r="2.200" fill="#f4c490" />
          </Icon>
        </Tool>
        <Tool label="Wstaw obraz">
          <Icon>
            <path d="M1.500 1.500h13v13h-13z" fill="#d4e4fa" stroke="#4468b0" />
            <path d="M2 14l4-6 3 4 2-2 3.500 4z" fill="#4470c0" />
            <circle cx="11" cy="5" r="2" fill="#e05828" />
          </Icon>
        </Tool>
        <Sep />
        <Tool label="Kolor wypełnienia">
          <Icon>
            <path d="M2.500 7L8 2l5 5-5.500 4.500z" fill="#e4eefa" stroke="#4468a0" />
            <path d="M6 5V2q0-1.500 1.500-1.500T9 2v4" stroke="#5c6c88" />
            <path d="M12.500 6.500c2 1 3 3 1.500 5-1-1-1.500-3-1.500-5z" fill="#3c74d8" />
            <path d="M0 12h16v4H0z" fill="#bce4e4" />
          </Icon>
        </Tool>
        <span className="w-[2px]" />
        <Drop label="Kolory wypełnienia" />
        <Tool label="Kolor linii">
          <Icon>
            <path d="M1 10c3-1 5-3 7-4l2 2c-2 2-5 3-9 2z" fill="#4c80dc" stroke="#24448c" strokeWidth=".7" />
            <path d="M8.500 6L13 .5l2 1.500-4.500 6z" fill="#f0b83c" stroke="#8c6410" strokeWidth=".7" />
            <path d="M0 12h16v4H0z" fill="#000" />
          </Icon>
        </Tool>
        <Drop label="Kolory linii" />
        <Tool label="Kolor czcionki"><FontColor /></Tool>
        <Drop label="Kolory czcionki" />
        <Tool label="Styl linii">
          <Icon>
            <path d="M1 3.500h14" stroke="#000" />
            <path d="M1 7h14" stroke="#000" strokeWidth="2" />
            <path d="M1 11.500h14" stroke="#000" strokeWidth="3" />
          </Icon>
        </Tool>
        <Tool label="Styl kreski">
          <Icon>
            <path d="M1 3.500h14" stroke="#000" strokeDasharray="1 1" />
            <path d="M1 6.500h14" stroke="#000" strokeDasharray="2 1" />
            <path d="M1 9.500h14" stroke="#000" strokeDasharray="4 1" />
            <path d="M1 12.500h14" stroke="#000" strokeDasharray="6 2 2 2" />
          </Icon>
        </Tool>
        <Tool label="Styl strzałki">
          <Icon>
            <path
              d="M1 3.500h13M11.500 1l3 2.500-3 2.500M15 8.500H2M4.500 6l-3 2.500 3 2.500M1 13.500h14M4 11.500l-2.500 2 2.500 2M12 11.500l2.500 2-2.500 2"
              stroke="#000"
            />
          </Icon>
        </Tool>
        <Tool label="Styl cienia">
          <Icon>
            <path d="M4 4h10v10H4z" fill="#8c8c8c" />
            <path d="M2.500 2.500h9v9h-9z" fill="#5ca860" stroke="#2c7034" />
            <path d="M3.500 10V3.500h7" stroke="#a4dca4" />
          </Icon>
        </Tool>
        <Tool label="Styl 3W">
          <Icon>
            <path d="M1.500 5.500L5 2h9.500v9L11 14.500H1.500z" fill="#3c8844" stroke="#205c28" />
            <path d="M1.500 5.500H11v9H1.500z" fill="#74bc74" stroke="#2c7034" />
            <path d="M1.500 5.500L5 2h9.500L11 5.500z" fill="#b0e0ac" stroke="#2c7034" />
          </Icon>
        </Tool>
        <span className="flex-1" />
        <BarEnd />
      </div>
    </div>
  );
}

function StatusBar() {
  return (
    <footer className="flex h-[22px] shrink-0 gap-[5px] px-[4px] pt-[3px] pb-[2px] text-center text-[11px] leading-[15px]">
      <span className="w-[245px] border border-[#d4d4d4]">Slajd 1 z 1</span>
      <span className="w-[245px] border border-[#d4d4d4]">Projekt domyślny</span>
      <span className="w-[177px] border border-[#d4d4d4]">Polski</span>
      <span className="flex w-[31px] items-start justify-center border border-[#d4d4d4]">
        <svg width="19" height="14" viewBox="0 0 19 14" fill="none">
          <path d="M1 3v9h6l2 1 2-1h6V3" fill="#606060" stroke="#000" />
          <path d="M2 1.500h5l2 1.500 2-1.500h4.500v9H11L9 12l-2-1.500H2z" fill="#fff" stroke="#000" strokeWidth=".8" />
          <path d="M9 3v8M3.500 4h3M3.500 6h3M3.500 8h3" stroke="#808080" />
          <path d="M10 6l2.500 3L18 .5" stroke="#a00c10" strokeWidth="1.800" />
        </svg>
      </span>
    </footer>
  );
}

const TASKS: { icon: ReactNode; text: string; count?: string }[] = [
  { icon: <Firefox />, text: "km maturity model - G..." },
  { icon: <PlainFolder />, text: "Eksplorator Wind...", count: "6" },
  { icon: <OfficeDoc />, text: "Access.doc - Microso..." },
  { icon: <OfficeDoc />, text: "Internetowy system w..." },
  { icon: <OfficeDoc />, text: "Śmietnik referatu.doc ..." },
  { icon: <OfficeDoc excel />, text: "Zestawienie przedmio..." },
];

function TaskBar() {
  return (
    <div className="flex h-[29px] shrink-0 items-start border-t border-white pt-[2px] pr-[2px] pl-[2px] text-[11px]">
      <button className="flex h-[22px] w-[50px] items-center gap-[2px] border border-t-white border-r-black border-b-black border-l-white pl-px text-[12px] font-bold shadow-[inset_-1px_-1px_0_#808080]">
        <WinFlag />
        Start
      </button>
      <span className="mt-[2px] ml-[7px] h-[19px] w-[3px] border border-t-white border-r-[#808080] border-b-[#808080] border-l-white" />
      <div className="ml-[6px] flex h-[22px] items-center gap-[7px]">
        <button aria-label="Pokaż pulpit">
          <Icon>
            <path d="M3.500 1.500h9l2 2v11h-11z" fill="#e4f0ff" stroke="#3c80d0" strokeWidth="1.500" />
            <path d="M1.500 5.500h9v8h-9z" fill="#a8d0fc" stroke="#2c74c8" />
            <path d="M4 10.500l.5-2.500L9 4l2 2-4.500 4z" fill="#fff" stroke="#2c60b0" />
          </Icon>
        </button>
        <button aria-label="Winamp">
          <Icon>
            <path d="M2 8L9 1h5l-3.500 4.500H15L6 15l1.500-5.500H1z" fill="#f8a824" stroke="#905010" />
            <path d="M5 7.500L9.500 3M9 9l3-2.500" stroke="#ffe4a0" />
          </Icon>
        </button>
        <button aria-label="Firefox"><Firefox /></button>
      </div>
      <span className="mt-[2px] ml-[10px] h-[19px] w-[3px] border border-t-white border-r-[#808080] border-b-[#808080] border-l-white" />
      <div className="ml-[4px] flex min-w-0 flex-1 gap-[3px]">
        {TASKS.map((t) => (
          <button
            key={t.text}
            className="flex h-[22px] w-[140px] min-w-0 items-center gap-[3px] border border-t-white border-r-black border-b-black border-l-white pl-[2px] whitespace-nowrap shadow-[inset_-1px_-1px_0_#808080]"
          >
            {t.icon}
            {t.count && <b>{t.count}</b>}
            <span>{t.text}</span>
            {t.count && <Caret />}
          </button>
        ))}
        <button className="flex h-[22px] w-[140px] min-w-0 items-center gap-[4px] border border-t-black border-r-white border-b-white border-l-black bg-[repeating-conic-gradient(#fff_0_25%,#c8c8c8_0_50%)] bg-[length:2px_2px] pl-[4px] text-[12px] font-bold whitespace-nowrap shadow-[inset_1px_1px_0_#808080]">
          <PptLogo />
          <span>Microsoft PowerP...</span>
        </button>
      </div>
      <span className="mt-[2px] mr-[8px] h-[19px] w-[3px] border border-t-white border-r-[#808080] border-b-[#808080] border-l-white" />
      <span className="mt-[4px] w-4 bg-[#000080] text-center leading-4 text-white">PL</span>
      <span className="ml-[4px] h-[24px] w-[2px] border-l border-r border-l-[#808080] border-r-white" />
      <button aria-label="Klawiatura" className="ml-[5px] flex h-[22px] items-center">
        <svg width="17" height="16" viewBox="0 0 17 16" fill="none">
          <path d="M4 1l1 1.500L6.500 1 8 2.500 9.500 1 11 2.500 12 1v4" stroke="#505050" strokeWidth=".8" />
          <path d="M1.500 6h14l1 8h-16z" fill="#e8e8e8" stroke="#000" />
          <path d="M3 8.500h12M2.500 10.500h12" stroke="#000" strokeWidth="1.300" strokeDasharray="1 1" />
          <path d="M4 12.500h9" stroke="#000" />
        </svg>
      </button>
      <span className="ml-[4px] h-[24px] w-[2px] border-l border-r border-l-[#808080] border-r-white" />
      <div className="ml-[5px] flex h-[24px] w-[58px] items-center border border-t-[#808080] border-r-white border-b-white border-l-[#808080] pl-[4px]">
        <svg width="8" height="6" viewBox="0 0 8 6" fill="none" stroke="#000" strokeWidth="1.300">
          <path d="M3.500 .5L1 3l2.500 2.500M7.500 .5L5 3l2.500 2.500" />
        </svg>
        <time className="ml-[10px]">19:26</time>
      </div>
    </div>
  );
}

export default function App() {
  return (
    <div className="flex h-screen flex-col overflow-hidden bg-[#c0c0c0] font-['Liberation_Sans',Arial,sans-serif] text-black">
      <TitleBar />
      <div className="shrink-0 border-t border-[#c0c0c0] bg-gradient-to-r from-[#c8c8c8] via-[#f0f0f0] via-55% to-[#f0f0f0]">
        <MenuBar />
        <Toolbars />
      </div>
      <div className="flex min-h-0 flex-1">
        <SlidePane />
        <Workspace />
        <TaskPane />
      </div>
      <DrawingBar />
      <StatusBar />
      <TaskBar />
    </div>
  );
}
